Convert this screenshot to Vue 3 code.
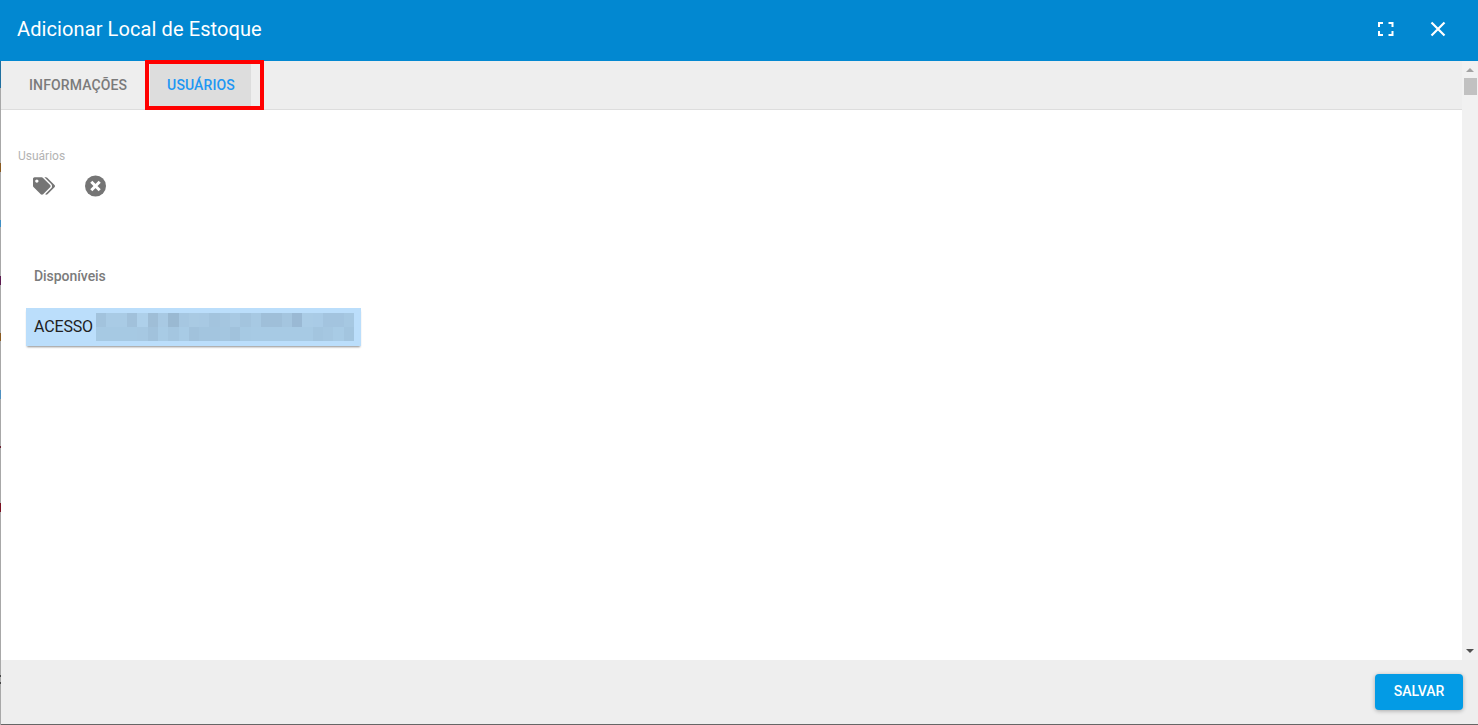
<script setup>
import { ref } from "vue"

const activeTab = ref("usuarios")

// tarja borrada do nome, duas linhas de blocos
const topRow = ["#a2c3dd","#a9cbe5","#a9cbe5","#a1c1db","#aed0ea","#9fbed7","#a8c9e3","#9ab9d2","#a6c7e1","#a9cae3","#a8c9e3","#a3c4de","#a5c6e0","#a8c9e3","#a3c4de","#a7c9e3","#9fbfd9","#9fbfd9","#a4c5df","#9ab9d4","#aacce6","#a9cbe6","#a3c4df","#a3c4df","#a6c8e2"]
const bottomRow = ["#a6c9e3","#a6c9e3","#a6c9e3","#a6c9e3","#a6c8e2","#a1c2dc","#a8cbe5","#a4c6e0","#a8cbe5","#a1c2dc","#a3c5df","#a3c5df","#a4c6e0","#a1c2dc","#a6c9e3","#a7cae4","#a7cae4","#a7cae4","#a7cae4","#a7cae4","#a7cae4","#a3c5df","#a5c7e1","#a8cbe5","#a3c5df"]
</script>

<template>
  <div class="page">
    <div class="edge"></div>
    <div class="modal">
      <header class="title-bar">
        <h1>Adicionar Local de Estoque</h1>
        <div class="title-actions">
          <button class="icon-btn" aria-label="Tela cheia">
            <svg width="16" height="16" viewBox="0 0 16 16"><path d="M1 6V2h4M10.500 2h4v4M14.500 10v4h-4M5 14H1v-4" fill="none" stroke="#fff" stroke-width="2"/></svg>
          </button>
          <button class="icon-btn" aria-label="Fechar">
            <svg width="16" height="16" viewBox="0 0 16 16"><path d="M1.500 1.500l13 13M14.500 1.500l-13 13" fill="none" stroke="#fff" stroke-width="2.200"/></svg>
          </button>
        </div>
      </header>

      <div class="body-row">
        <div class="content">
          <nav class="tabs">
            <a class="tab">INFORMAÇÕES</a>
            <div class="tab-mark">
              <a class="tab" :class="{ active: activeTab === 'usuarios' }">USUÁRIOS</a>
            </div>
          </nav>

          <section class="panel">
            <label class="field-label">Usuários</label>
            <div class="field-icons">
              <svg class="tags" width="22" height="18" viewBox="0 0 640 512">
                <path fill="#757575" d="M497.941 225.941L286.059 14.059A48 48 0 0 0 252.118 0H48C21.490 0 0 21.490 0 48v204.118a48 48 0 0 0 14.059 33.941l211.882 211.882c18.744 18.745 49.136 18.746 67.882 0l204.118-204.118c18.745-18.745 18.745-49.137 0-67.882zM112 160c-26.510 0-48-21.490-48-48s21.490-48 48-48 48 21.490 48 48-21.490 48-48 48zm513.941 133.823L421.823 497.941c-18.745 18.745-49.137 18.745-67.882 0l-.360-.360L527.640 323.522c16.999-16.999 26.360-39.600 26.360-63.640s-9.362-46.641-26.360-63.640L331.397 0h48.721a48 48 0 0 1 33.941 14.059l211.882 211.882c18.745 18.745 18.745 49.137 0 67.882z"/>
              </svg>
              <svg class="clear" width="22" height="22" viewBox="0 0 22 22">
                <circle cx="10.500" cy="11" r="10.500" fill="#757575"/>
                <path d="M6.300 6.800l8.400 8.400M14.700 6.800l-8.400 8.400" stroke="#fff" stroke-width="3"/>
              </svg>
            </div>

            <h2 class="list-title">Disponíveis</h2>
            <div class="user-item">
              <span>ACESSO</span>
              <div class="mosaic">
                <i v-for="(c, i) in topRow" :key="'t' + i" :style="{ background: c }"></i>
                <i v-for="(c, i) in bottomRow" :key="'b' + i" :style="{ background: c }"></i>
              </div>
            </div>
          </section>
        </div>

        <aside class="scrollbar">
          <span class="arrow up"></span>
          <div class="track"><div class="thumb"></div></div>
          <span class="arrow down"></span>
        </aside>
      </div>

      <footer class="actions">
        <button class="save">SALVAR</button>
      </footer>
    </div>
  </div>
</template>

<style>
html, body {
  margin: 0;
  overflow: hidden;
}
</style>

<style scoped>
.page {
  display: flex;
  width: 1478px;
  height: 725px;
  font-family: Roboto, "Liberation Sans", sans-serif;
  background: #fff;
}
.edge {
  width: 1px;
  background: linear-gradient(to bottom,
    #0288d1 0 61px, #1f6f9f 61px 88px, #a8a8a8 88px 163px, #8a5a20 163px 172px, #a8a8a8 172px 220px,
    #3f8fc4 220px 227px, #a8a8a8 227px 276px, #5c1a50 276px 285px, #a8a8a8 285px 333px,
    #8a5a20 333px 341px, #a8a8a8 341px 390px, #4f90c0 390px 399px, #a8a8a8 399px 446px,
    #6a2030 446px 448px, #a8a8a8 448px 503px, #7a1020 503px 512px, #a8a8a8 512px 675px,
    #444 675px 677px, #a8a8a8 677px 682px, #444 682px 684px, #a8a8a8 684px);
}
.modal {
  flex: 1;
  min-width: 0;
  display: flex;
  flex-direction: column;
  border-bottom: 1px solid #666;
}
.title-bar {
  height: 61px;
  flex: none;
  display: flex;
  align-items: center;
  justify-content: space-between;
  padding: 0 32px 3px 16px;
  box-sizing: border-box;
  background: #0288d1;
  color: #fff;
}
h1 {
  margin: 0;
  font-size: 20px;
  font-weight: 400;
  letter-spacing: 0.1px;
}
.title-actions {
  display: flex;
  gap: 36px;
}
.icon-btn {
  display: flex;
  width: 16px;
  height: 16px;
  padding: 0;
  border: 0;
  background: none;
}
.body-row {
  flex: 1;
  min-height: 0;
  display: flex;
}
.content {
  flex: 1;
  min-width: 0;
  display: flex;
  flex-direction: column;
}
.tabs {
  height: 49px;
  flex: none;
  display: flex;
  box-sizing: border-box;
  background: #eee;
  border-bottom: 1px solid #ddd;
}
.tab {
  display: flex;
  align-items: center;
  padding: 0 28px;
  font-size: 14px;
  font-weight: 500;
  letter-spacing: 0.12px;
  color: #7b7b7b;
}
.tab-mark {
  display: flex;
  height: 50px;
  margin: -1px 0 0 -10px;
  padding: 0 9px 0 1px;
  box-sizing: border-box;
  border: 4px solid #f00;
  position: relative;
  z-index: 1;
}
.tab-mark .tab {
  padding: 0 16px 0 17px;
}
.tab.active {
  background: #ddd;
  color: #2196f3;
}
.panel {
  flex: 1;
  padding: 39px 17px 0;
  background: #fff;
}
.field-label {
  display: block;
  font-size: 12px;
  line-height: 14px;
  color: #b3b3b3;
}
.field-icons {
  display: flex;
  align-items: center;
  gap: 30px;
  margin: 12px 0 0 15px;
  height: 22px;
}
.list-title {
  margin: 71px 0 0 16px;
  font-size: 14px;
  line-height: 16px;
  font-weight: 500;
  letter-spacing: -0.05px;
  color: #7b7b7b;
}
.user-item {
  display: flex;
  align-items: center;
  width: 335px;
  height: 38px;
  margin: 24px 0 0 8px;
  padding-left: 8px;
  box-sizing: border-box;
  background: #bbdefb;
  box-shadow: 0 2px 2px -1px rgba(0, 0, 0, 0.45);
  font-size: 16px;
  letter-spacing: -0.15px;
  color: #212121;
}
.user-item span {
  padding-bottom: 1px;
}
.mosaic {
  display: grid;
  grid-template-columns: repeat(25, 1fr);
  grid-template-rows: 14px 14px;
  width: 258px;
  margin-left: 3px;
}
.scrollbar {
  width: 16px;
  flex: none;
  display: flex;
  flex-direction: column;
  align-items: center;
  background: #f1f1f1;
}
.arrow {
  width: 0;
  height: 0;
  flex: none;
  border-left: 4px solid transparent;
  border-right: 4px solid transparent;
}
.arrow.up {
  margin-top: 7px;
  border-bottom: 4px solid #a3a3a3;
}
.arrow.down {
  margin-bottom: 7px;
  border-top: 4px solid #505050;
}
.track {
  flex: 1;
  width: 100%;
  padding-top: 6px;
}
.thumb {
  height: 17px;
  width: 13px;
  margin: 0 auto;
  background: #c1c1c1;
}
.actions {
  height: 64px;
  flex: none;
  display: flex;
  align-items: flex-start;
  justify-content: flex-end;
  padding: 14px 15px 0 0;
  box-sizing: border-box;
  background: #eee;
}
.save {
  width: 88px;
  height: 36px;
  padding: 0 0 2px;
  border: 0;
  border-radius: 4px;
  background: #039be5;
  color: #fff;
  font-family: inherit;
  font-size: 14px;
  font-weight: 500;
  box-shadow: 0 1px 4px rgba(0, 0, 0, 0.3);
}
</style>
